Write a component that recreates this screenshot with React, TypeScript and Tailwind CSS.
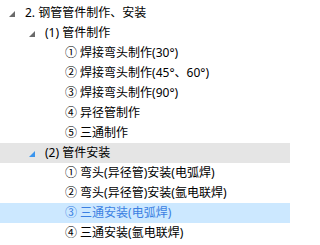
import React from 'react';

type Node = {
  label: string;
  level: number;
  expanded?: boolean;
  hover?: boolean;
  selected?: boolean;
};

const rows: Node[] = [
  { label: '2. 钢管管件制作、安装', level: 0, expanded: true },
  { label: '(1) 管件制作', level: 1, expanded: true },
  { label: '① 焊接弯头制作(30°)', level: 2 },
  { label: '② 焊接弯头制作(45°、60°)', level: 2 },
  { label: '③ 焊接弯头制作(90°)', level: 2 },
  { label: '④ 异径管制作', level: 2 },
  { label: '⑤ 三通制作', level: 2 },
  { label: '(2) 管件安装', level: 1, expanded: true, hover: true },
  { label: '① 弯头(异径管)安装(电弧焊)', level: 2 },
  { label: '② 弯头(异径管)安装(氩电联焊)', level: 2 },
  { label: '③ 三通安装(电弧焊)', level: 2, selected: true },
  { label: '④ 三通安装(氩电联焊)', level: 2 },
];

// small filled "expanded" glyph, like the Windows tree view
const ExpandedArrow = ({ active }: { active?: boolean }) => (
  <svg width="6" height="6" viewBox="0 0 6 6" className="shrink-0 mr-[10px] translate-y-[1px]">
    <path d="M6 0 L6 6 L0 6 Z" fill={active ? '#3b95ee' : '#6a6a6a'} />
  </svg>
);

const TreeRow = ({ node }: { node: Node }) => {
  const pad = ['pl-[9px]', 'pl-[29px]', 'pl-[65px]'][node.level];
  const bg = node.selected ? 'bg-[#cce8ff]' : node.hover ? 'bg-[#e5e5e5]' : 'bg-white';
  const color = node.selected ? 'text-[#3a7fe2]' : 'text-black';
  return (
    <div className={`h-5 flex items-center whitespace-nowrap ${pad} ${bg} ${color}`}>
      {node.expanded && <ExpandedArrow active={node.hover} />}
      <span>{node.label}</span>
    </div>
  );
};

export default function App() {
  return (
    <div
      className="w-[290px] h-[245px] bg-white overflow-hidden pt-[3px] text-[12px] leading-5"
      style={{ fontFamily: '"Noto Sans", "Noto Sans CJK SC", sans-serif' }}
    >
      {rows.map((r, i) => (
        <TreeRow key={i} node={r} />
      ))}
    </div>
  );
}
